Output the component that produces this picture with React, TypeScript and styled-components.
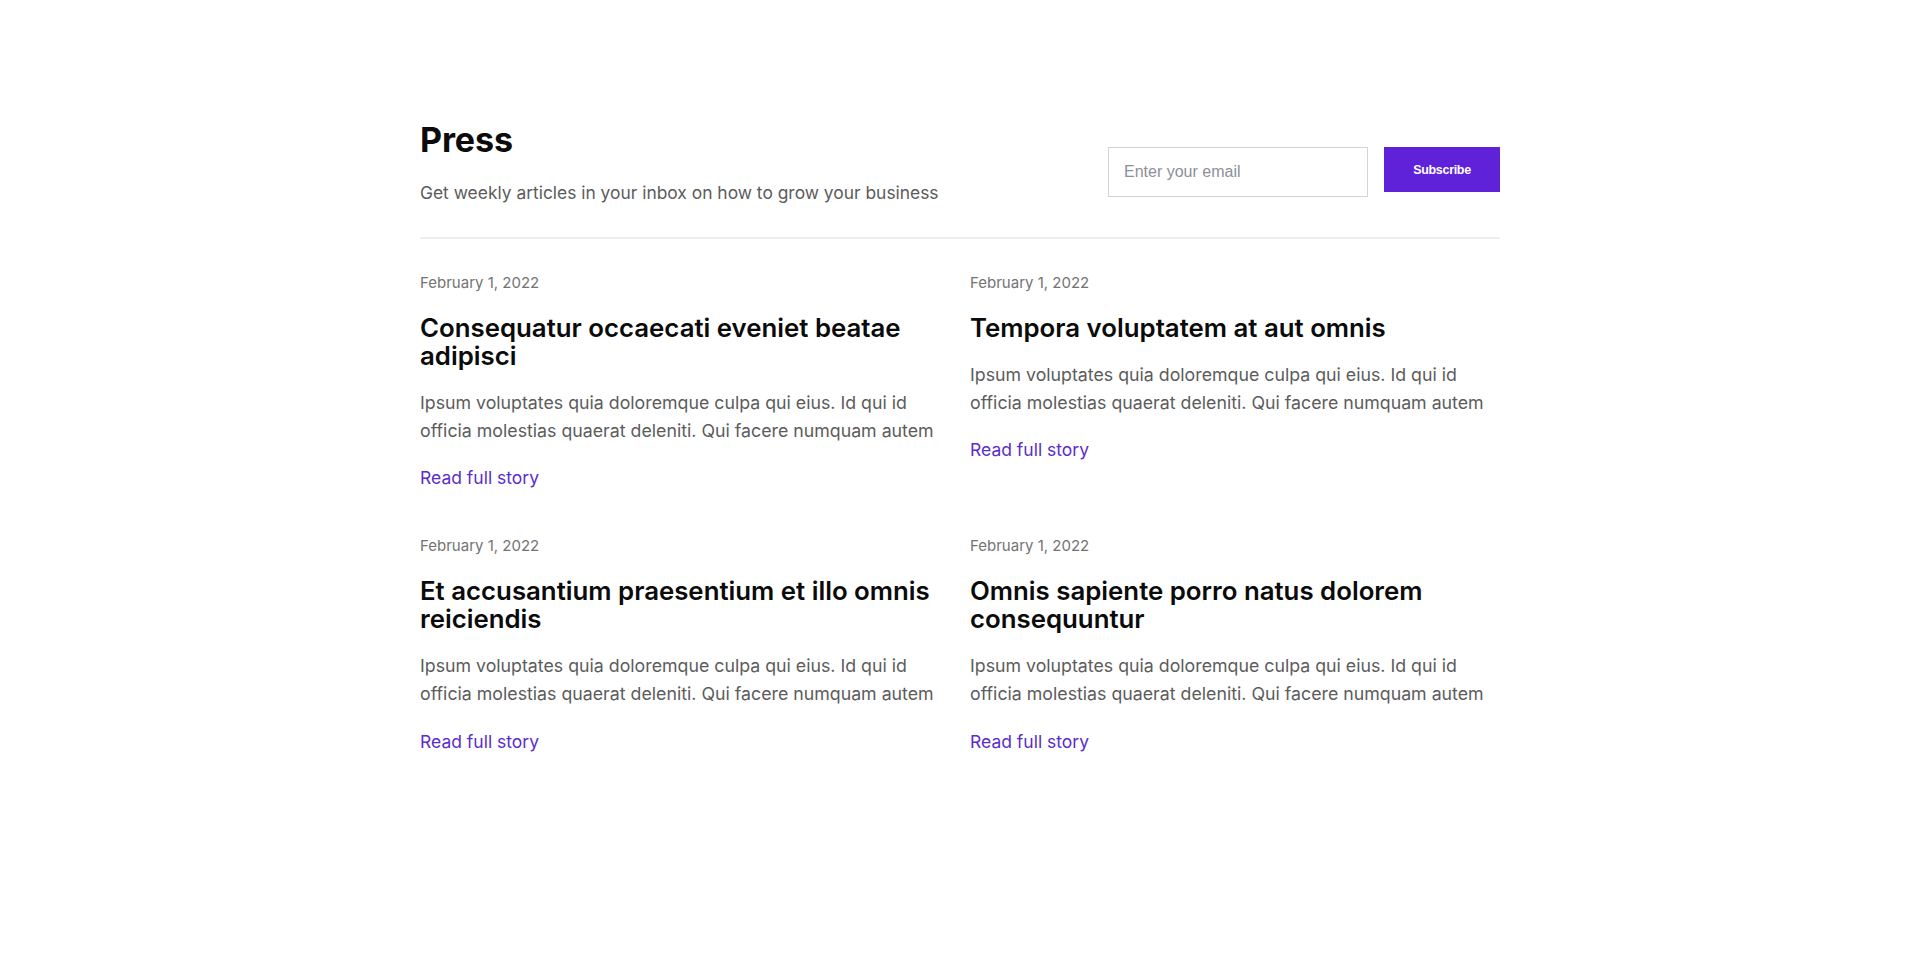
import React from "react";
import styled, { createGlobalStyle } from "styled-components";

const GlobalStyle = createGlobalStyle`
  html, body { margin: 0; padding: 0; background: #ffffff; }
  body {
    font-family: Inter, "Noto Sans", sans-serif;
    color: #111111;
    -webkit-font-smoothing: antialiased;
  }
  * { box-sizing: border-box; }
`;

const Page = styled.main`
  width: 1080px;
  margin: 0 auto;
  padding: 120px 0 80px;
`;

const Header = styled.header`
  display: flex;
  justify-content: space-between;
  align-items: flex-start;
  padding-bottom: 30px;
  border-bottom: 2px solid #eeeeee;
`;

const Intro = styled.div`
  display: flex;
  flex-direction: column;
`;

const Title = styled.h1`
  margin: 0;
  font-size: 34px;
  line-height: 39.6px;
  font-weight: 700;
  color: #0b0b0b;
  letter-spacing: -0.1px;
`;

const Lead = styled.p`
  margin: 19px 0 0;
  font-size: 17.4px;
  line-height: 28px;
  color: #5c5c5c;
`;

const SubscribeForm = styled.form`
  display: flex;
  align-items: flex-start;
  gap: 16px;
  margin-top: 27px;
`;

const EmailInput = styled.input`
  width: 260px;
  height: 50px;
  padding: 0 15px;
  border: 1px solid #d4d4d4;
  border-radius: 0;
  font-family: "Liberation Sans", Arial, sans-serif;
  font-size: 16px;
  color: #333;
  outline: none;
  &::placeholder { color: #8b9099; }
`;

const SubscribeButton = styled.button`
  width: 116px;
  height: 45px;
  border: 0;
  background: #6022d9;
  color: #ffffff;
  font-family: "Liberation Sans", Arial, sans-serif;
  font-size: 12.5px;
  font-weight: 700;
  letter-spacing: -0.3px;
  cursor: pointer;
`;

const Articles = styled.section`
  display: grid;
  grid-template-columns: 530px 530px;
  column-gap: 20px;
  row-gap: 43px;
  padding-top: 33px;
`;

const Article = styled.article`
  display: flex;
  flex-direction: column;
  align-items: flex-start;
`;

const DateLine = styled.time`
  font-size: 15px;
  line-height: 22.5px;
  color: #737373;
`;

const ArticleTitle = styled.h2`
  margin: 19.5px 0 0;
  font-size: 25.8px;
  line-height: 28px;
  font-weight: 600;
  color: #0b0b0b;
`;

const Excerpt = styled.p`
  margin: 19px 0 0;
  font-size: 17.75px;
  line-height: 28px;
  color: #5c5c5c;
`;

const StoryLink = styled.a`
  margin-top: 19.5px;
  font-size: 17.5px;
  line-height: 28px;
  color: #5a2dcc;
  text-decoration: none;
`;

const excerpt =
  "Ipsum voluptates quia doloremque culpa qui eius. Id qui id officia molestias quaerat deleniti. Qui facere numquam autem";

const posts = [
  { title: "Consequatur occaecati eveniet beatae adipisci" },
  { title: "Tempora voluptatem at aut omnis" },
  { title: "Et accusantium praesentium et illo omnis reiciendis" },
  { title: "Omnis sapiente porro natus dolorem consequuntur" },
];

export default function App() {
  return (
    <>
      <GlobalStyle />
      <Page>
        <Header>
          <Intro>
            <Title>Press</Title>
            <Lead>Get weekly articles in your inbox on how to grow your business</Lead>
          </Intro>
          <SubscribeForm onSubmit={(e) => e.preventDefault()}>
            <EmailInput type="email" placeholder="Enter your email" />
            <SubscribeButton type="submit">Subscribe</SubscribeButton>
          </SubscribeForm>
        </Header>
        <Articles>
          {posts.map((p) => (
            <Article key={p.title}>
              <DateLine>February 1, 2022</DateLine>
              <ArticleTitle>{p.title}</ArticleTitle>
              <Excerpt>{excerpt}</Excerpt>
              <StoryLink href="#">Read full story</StoryLink>
            </Article>
          ))}
        </Articles>
      </Page>
    </>
  );
}
